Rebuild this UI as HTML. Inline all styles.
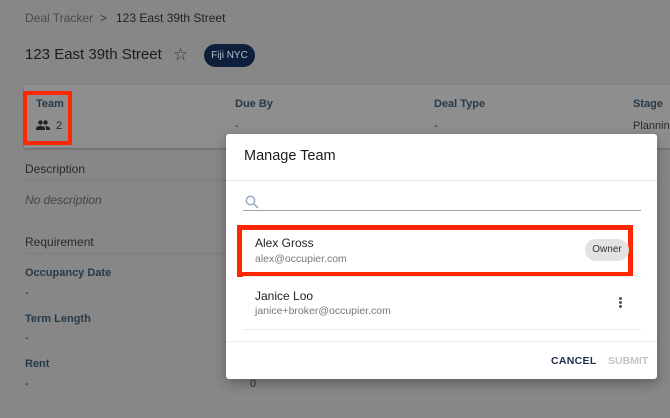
<!DOCTYPE html>
<html><head><style>
*{margin:0;padding:0;box-sizing:border-box}
body{width:670px;height:418px;overflow:hidden;background:#878787;font-family:"Liberation Sans",sans-serif;position:relative;color:#1f1f1f}
.a{position:absolute;white-space:nowrap}
.lbl{color:#263a48;font-weight:bold;font-size:11px}
.v{color:#2a2a2a;font-size:11px}
</style></head><body>
<div class="a" style="left:25px;top:11px;font-size:12px;color:#4a4a4a">Deal Tracker</div>
<div class="a" style="left:100px;top:11px;font-size:12px;color:#3a3a3a">&gt;</div>
<div class="a" style="left:116px;top:11px;font-size:12px;color:#222">123 East 39th Street</div>
<div class="a" style="left:25px;top:46px;font-size:15px;color:#1c1c1c">123 East 39th Street</div>
<div class="a" style="left:173px;top:45px;font-size:17px;color:#333">☆</div>
<div class="a" style="left:204px;top:44px;width:51px;height:23px;border-radius:12px;background:#0e1f3c;color:#b8bfcc;font-size:10px;text-align:center;line-height:23px">Fiji NYC</div>
<div class="a" style="left:24px;top:85px;width:660px;height:63px;background:#8e8e8e;box-shadow:0 1px 2px rgba(0,0,0,.25)"></div>
<div class="a" style="left:23px;top:91px;width:49px;height:54px;border:4px solid #ff2600"></div>
<div class="a lbl" style="left:36px;top:98px">Team</div>
<svg class="a" style="left:36px;top:120px" width="14" height="10" viewBox="0 0 14 10"><circle cx="4.5" cy="2.5" r="2.2" fill="#222"/><circle cx="9.5" cy="2.5" r="2.2" fill="#222"/><path d="M0 10V8.5C0 6.5 3 6 4.5 6S9 6.5 9 8.5V10ZM10 10V8.5C10 7.5 9.5 6.8 9 6.3C11 6 14 6.8 14 8.5V10Z" fill="#222"/></svg>
<div class="a v" style="left:56px;top:120px">2</div>
<div class="a lbl" style="left:235px;top:98px">Due By</div>
<div class="a v" style="left:235px;top:120px">-</div>
<div class="a lbl" style="left:434px;top:98px">Deal Type</div>
<div class="a v" style="left:434px;top:120px">-</div>
<div class="a lbl" style="left:633px;top:98px">Stage</div>
<div class="a v" style="left:633px;top:120px">Planning</div>
<div class="a" style="left:25px;top:162px;font-size:12px;color:#2a2a2a">Description</div>
<div class="a" style="left:25px;top:180px;width:220px;height:1px;background:#7d7d7d"></div>
<div class="a" style="left:25px;top:193px;font-size:12px;font-style:italic;color:#444">No description</div>
<div class="a" style="left:25px;top:235px;font-size:12px;color:#2a2a2a">Requirement</div>
<div class="a" style="left:25px;top:253px;width:220px;height:1px;background:#7d7d7d"></div>
<div class="a lbl" style="left:25px;top:267px">Occupancy Date</div>
<div class="a v" style="left:25px;top:287px">-</div>
<div class="a lbl" style="left:25px;top:313px">Term Length</div>
<div class="a v" style="left:25px;top:332px">-</div>
<div class="a lbl" style="left:25px;top:358px">Rent</div>
<div class="a v" style="left:25px;top:378px">-</div>
<div class="a v" style="left:250px;top:378px">0</div>

<div class="a" style="left:226px;top:134px;width:431px;height:245px;background:#fff;border-radius:3px;box-shadow:0 4px 12px rgba(0,0,0,.3)"></div>
<div class="a" style="left:244px;top:148px;font-size:14.5px;color:#1c1c1c">Manage Team</div>
<div class="a" style="left:226px;top:180px;width:431px;height:1px;background:#e8e8e8"></div>
<svg class="a" style="left:245px;top:195px" width="14" height="14" viewBox="0 0 14 14"><circle cx="5.5" cy="5.5" r="4.2" fill="none" stroke="#9aaac0" stroke-width="1.5"/><path d="M8.6 8.6L13 13" stroke="#9aaac0" stroke-width="1.6"/></svg>
<div class="a" style="left:243px;top:210px;width:398px;height:1px;background:#a0a0a0"></div>
<div class="a" style="left:237px;top:225px;width:396px;height:52px;border:5px solid #ff2600"></div>
<div class="a" style="left:255px;top:236px;font-size:12px;color:#222">Alex Gross</div>
<div class="a" style="left:255px;top:253px;font-size:10.5px;color:#777">alex@occupier.com</div>
<div class="a" style="left:585px;top:239px;width:44px;height:22px;border-radius:11px;background:#e2e2e2;font-size:10px;color:#333;text-align:center;line-height:22px">Owner</div>
<div class="a" style="left:243px;top:276px;width:398px;height:1px;background:#ececec"></div>
<div class="a" style="left:255px;top:289px;font-size:12px;color:#222">Janice Loo</div>
<div class="a" style="left:255px;top:305px;font-size:10.5px;color:#777">janice+broker@occupier.com</div>
<div class="a" style="left:619px;top:297px;width:3px;height:3px;border-radius:50%;background:#555;box-shadow:0 4px 0 #555,0 8px 0 #555"></div>
<div class="a" style="left:243px;top:329px;width:398px;height:1px;background:#ececec"></div>
<div class="a" style="left:226px;top:341px;width:431px;height:1px;background:#ececec"></div>
<div class="a" style="left:551px;top:355px;font-size:10.5px;font-weight:bold;color:#1c2e4a;letter-spacing:.3px">CANCEL</div>
<div class="a" style="left:608px;top:355px;font-size:10.5px;font-weight:bold;color:#c4c4c4;letter-spacing:0">SUBMIT</div>
</body></html>
